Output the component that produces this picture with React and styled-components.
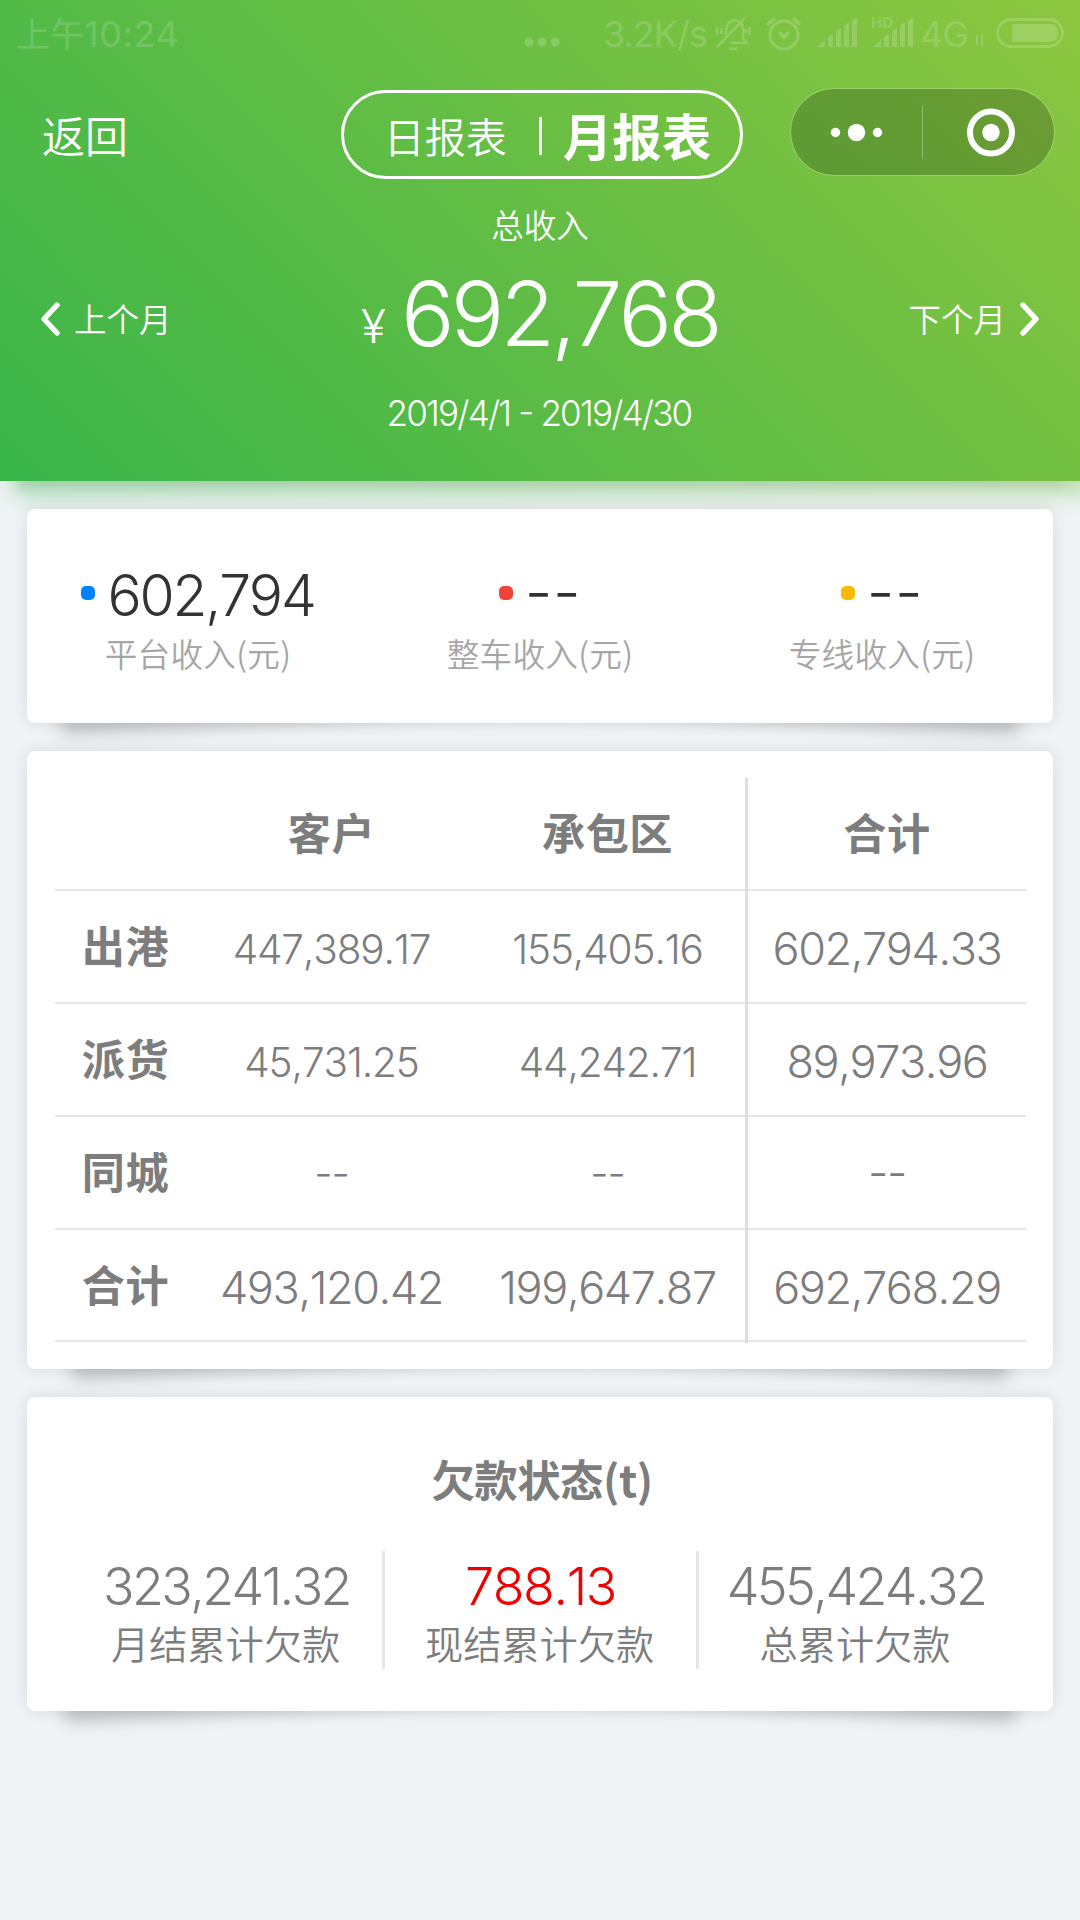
import React from "react";
import styled, {createGlobalStyle, css} from "styled-components";

const COLORS = {
  page: "#eff3f6",
  white: "#ffffff",
  black: "#333333",
  grey: "#7d7d7d",
  light: "#a6a6a6",
  line: "#e6e6e6",
  blue: "#0081ff",
  red: "#f0443a",
  yellow: "#fbb903",
  alert: "#f00000"
};

const GREEN = "linear-gradient(45deg, #39b54a, #8dc63f)";

const GlobalStyle = createGlobalStyle`
  * {
    box-sizing: border-box;
  }

  body {
    margin: 0;
    background: ${COLORS.page};
    font-family: "Noto Sans CJK SC", sans-serif;
    font-weight: 350;
  }
`;

// light figures, with dashes raised to the height of the digits
const figures = css`
  font-family: Inter, "Noto Sans CJK SC", sans-serif;
  font-weight: 300;
  font-feature-settings: "kern" 0, "case" 1;
`;

const Page = styled.div`
  width: 1080px;
  height: 1920px;
  overflow: hidden;
  position: relative;
  isolation: isolate;
`;

const Header = styled.header`
  position: relative;
  height: 481px;
  color: ${COLORS.white};
  background: ${GREEN};
  box-shadow: 0 18px 16px -16px rgba(0, 0, 0, 0.1);

  &::before {
    content: "";
    position: absolute;
    z-index: -1;
    top: 14px;
    left: 14px;
    width: 100%;
    height: 100%;
    background: inherit;
    filter: blur(11px);
    opacity: 0.4;
  }
`;

const StatusBar = styled.div`
  display: flex;
  height: 88px;
  padding: 0 16px;
  color: rgba(255, 255, 255, 0.18);
  font-family: Inter, "Noto Sans CJK SC", sans-serif;
  font-size: 36px;
  line-height: 69px;
  font-weight: 400;
  white-space: nowrap;

  svg {
    flex: none;
    height: 68px;
  }
`;

const Clock = styled.span`
  flex: none;
  width: 508px;
  font-size: 34px;

  b {
    font-size: 36px;
    font-weight: 400;
    letter-spacing: 0.6px;
  }
`;

const Speed = styled.span`
  flex: none;
  width: 111px;
  margin-left: 43px;
  letter-spacing: -1px;
`;

const NavBar = styled.nav`
  display: flex;
  height: 112px;
  padding-left: 42px;
`;

const Back = styled.div`
  width: 299px;
  font-size: 43px;
  line-height: 92px;
`;

const Tabs = styled.div`
  display: flex;
  justify-content: center;
  align-items: center;
  width: 402px;
  height: 89px;
  margin-top: 2px;
  padding-left: 11px;
  border: 3px solid ${COLORS.white};
  border-radius: 45px;
`;

const Tab = styled.div`
  font-size: ${({$active}) => $active ? 49.5 : 41}px;
  font-weight: ${({$active}) => $active ? 700 : 350};
  line-height: ${({$active}) => $active ? 82 : 84}px;
`;

const TabDivider = styled.i`
  width: 3px;
  height: 38px;
  margin: 3px 21px 0 32px;
  background: ${COLORS.white};
`;

const Capsule = styled.div`
  display: flex;
  align-items: center;
  width: 265px;
  height: 88px;
  margin-left: 47px;
  padding-left: 1px;
  border: 1px solid rgba(255, 255, 255, 0.2);
  border-radius: 44px;
  background: rgba(0, 0, 0, 0.2);
  background-clip: padding-box;
`;

const Summary = styled.section`
  display: grid;
  grid-template-columns: 260px 1fr 260px;
  align-items: center;
`;

const Total = styled.div`
  display: flex;
  flex-direction: column;
  align-items: center;
`;

const TotalLabel = styled.div`
  font-size: 32.5px;
  line-height: 48px;
`;

const TotalValue = styled.div`
  ${figures}
  display: flex;
  align-items: baseline;
  height: 141px;
  font-size: 89px;
  line-height: 132px;
  letter-spacing: -3.8px;
`;

const Currency = styled.span`
  position: relative;
  top: -3px;
  margin-right: 15px;
  font-size: 46px;
  letter-spacing: 0;
`;

const Period = styled.div`
  ${figures}
  margin-left: -2px;
  font-size: 35px;
  line-height: 48px;
  letter-spacing: -1.8px;
`;

const MonthLink = styled.div`
  display: flex;
  align-items: center;
  justify-content: ${({$next}) => $next ? "flex-end" : "flex-start"};
  gap: 14px;
  padding: 0 40px;
  font-size: 32.5px;
  line-height: 44px;

  span {
    padding-bottom: 2px;
  }
`;

const warp = css`
  content: "";
  position: absolute;
  z-index: -1;
  top: 28.8px;
  bottom: 43.2px;
  width: 50%;
  box-shadow: 0 41px 17px rgba(0, 0, 0, 0.2);
`;

const Card = styled.section`
  position: relative;
  margin: 0 27px 28px;
  border-radius: 8px;
  background: ${COLORS.white};
  box-shadow: 0 0 14.4px rgba(0, 0, 0, 0.1);

  &::before {
    ${warp}
    left: 28.8px;
    transform: rotate(-3deg);
  }

  &::after {
    ${warp}
    right: 28.8px;
    transform: rotate(3deg);
  }
`;

const Cards = styled.main`
  padding-top: 28px;
`;

const IncomeCard = styled(Card)`
  display: grid;
  grid-template-columns: repeat(3, 1fr);
  height: 214px;
  padding-top: 52px;
  text-align: center;
`;

const IncomeItem = styled.div`
  display: flex;
  flex-direction: column;
  align-items: center;
`;

const IncomeValue = styled.div`
  ${figures}
  display: flex;
  align-items: center;
  height: 68px;
  color: ${COLORS.black};
  font-size: 57px;
  letter-spacing: -2.2px;

  ${({$empty}) => $empty && css`
    font-size: 61px;
    font-weight: 350;
    letter-spacing: 0.6px;
  `}
`;

const Dot = styled.i`
  width: 14px;
  height: 14px;
  margin: 0 12px 4px 0;
  border-radius: 5px;
  background: ${({$color}) => $color};
`;

const IncomeLabel = styled.div`
  color: ${COLORS.light};
  font-size: 32.6px;
  line-height: 48px;
  letter-spacing: 0.3px;
`;

const TableCard = styled(Card)`
  height: 618px;
  padding: 27px 27px 0 28px;
`;

const Row = styled.div`
  display: grid;
  grid-template-columns: 138px 277px 275px 1fr;
  height: 112.9px;
  border-bottom: 2px solid ${COLORS.line};
  color: ${COLORS.grey};
  text-align: center;
`;

const Cell = styled.div`
  ${figures}
  font-size: ${({$big}) => $big ? 45 : 40.5}px;
  line-height: ${({$big}) => $big ? 115 : 118}px;
  letter-spacing: ${({$big}) => $big ? -1.4 : -1.1}px;
`;

const HeadCell = styled.div`
  font-size: 43.2px;
  font-weight: 700;
  line-height: 106px;
  letter-spacing: 0.5px;
`;

const NameCell = styled(HeadCell)`
  padding-left: 3px;
`;

const SumCell = styled(Cell)`
  height: 113px;
  border-left: 3px solid #dedede;
`;

const SumHead = styled(HeadCell)`
  height: 113px;
  border-left: 3px solid #dedede;
`;

const DebtCard = styled(Card)`
  height: 314px;
  padding: 50px 40px 0 44px;
  color: ${COLORS.grey};
  text-align: center;
`;

const DebtTitle = styled.h2`
  margin: 0 0 42px;
  font-size: 43.4px;
  font-weight: 700;
  line-height: 62px;
  letter-spacing: -0.5px;
`;

const DebtList = styled.div`
  display: grid;
  grid-template-columns: repeat(3, 1fr);
`;

const DebtItem = styled.div`
  height: 118px;
  padding-top: 6px;
  border-right: 3px solid ${COLORS.line};

  &:last-child {
    border-right: 0;
  }
`;

const DebtValue = styled.div`
  ${figures}
  color: ${({$alert}) => $alert ? COLORS.alert : COLORS.grey};
  font-size: 52px;
  line-height: 60px;
  letter-spacing: ${({$alert}) => $alert ? -1.4 : -2.6}px;
`;

const DebtLabel = styled.div`
  margin-left: -2px;
  font-size: 38.2px;
  line-height: 52px;
`;

const incomes = [
  {color: COLORS.blue, value: "602,794", label: "平台收入(元)"},
  {color: COLORS.red, value: "--", label: "整车收入(元)"},
  {color: COLORS.yellow, value: "--", label: "专线收入(元)"}
];

const rows = [
  {name: "出港", values: ["447,389.17", "155,405.16"], sum: "602,794.33"},
  {name: "派货", values: ["45,731.25", "44,242.71"], sum: "89,973.96"},
  {name: "同城", values: ["--", "--"], sum: "--"},
  {name: "合计", values: ["493,120.42", "199,647.87"], sum: "692,768.29", total: true}
];

const debts = [
  {value: "323,241.32", label: "月结累计欠款"},
  {value: "788.13", label: "现结累计欠款", alert: true},
  {value: "455,424.32", label: "总累计欠款"}
];

// everything right of the network speed in the system bar
const StatusIcons = () => (
  <svg width="350" height="68" viewBox="714 0 350 68" fill="none" stroke="currentColor" strokeWidth="2.6">
    <path d="M730 43H747L743 38V30C743 17 727 17 726 30V35M717 47L745 18M729 48Q733 50 737 48M717.500 27Q716 31 717.500 35M721.500 28V34M749 27Q750.500 31 749 35M746 29V33" />
    <circle cx="784" cy="35" r="14" strokeWidth="3" />
    <path d="M779 32L784 37L789 32M767 25L775 18M793 18L800 25" strokeWidth="3.4" />
    <g fill="currentColor" stroke="none">
      <path d="M817 47L825 40V47ZM828 37L833 34V47H828ZM836 32L841 28V47H836ZM844 26L849 22V47H844ZM852 21L857 17V47H852Z" />
      <path d="M873 47L881 40V47ZM884 37L889 34V47H884ZM892 32L897 28V47H892ZM900 26L905 22V47H900ZM908 21L913 17V47H908Z" />
      <path d="M1012 24H1050Q1058 24 1058 33Q1058 42 1050 42H1012Z" />
      <text x="871" y="28" fontSize="15" fontWeight="700">HD</text>
      <text x="920" y="47" fontSize="36" fontWeight="400" letterSpacing="-1">4G</text>
    </g>
    <path d="M977 35V46M982 35V46" strokeWidth="2" />
    <rect x="997.5" y="19.5" width="65" height="27" rx="13.5" strokeWidth="3" />
  </svg>
);

const Dots = () => (
  <svg width="36" height="68" viewBox="0 0 36 68" fill="currentColor">
    <circle cx="5" cy="42" r="4.5" />
    <circle cx="18" cy="42" r="4.5" />
    <circle cx="31" cy="42" r="4.5" />
  </svg>
);

const CapsuleIcons = () => (
  <svg width="262" height="86" viewBox="0 0 262 86" fill="#fff">
    <circle cx="43.5" cy="43.5" r="4.7" />
    <circle cx="64.5" cy="43.5" r="8.7" />
    <circle cx="85.5" cy="43.5" r="4.7" />
    <path d="M130.5 16V70" stroke="#fff" strokeOpacity="0.3" />
    <circle cx="199" cy="43.5" r="8.7" />
    <circle cx="199" cy="43.5" r="21" fill="none" stroke="#fff" strokeWidth="6" />
  </svg>
);

const Chevron = ({d}) => (
  <svg width="20" height="36" viewBox="0 0 20 36" fill="none" stroke="#fff" strokeWidth="5.4" strokeLinecap="round" strokeLinejoin="round">
    <path d={d} />
  </svg>
);

const App = () => {
  return (
    <Page>
      <GlobalStyle />
      <Header>
        <StatusBar>
          <Clock>上午<b>10:24</b></Clock>
          <Dots />
          <Speed>3.2K/s</Speed>
          <StatusIcons />
        </StatusBar>
        <NavBar>
          <Back>返回</Back>
          <Tabs>
            <Tab>日报表</Tab>
            <TabDivider />
            <Tab $active>月报表</Tab>
          </Tabs>
          <Capsule>
            <CapsuleIcons />
          </Capsule>
        </NavBar>
        <Summary>
          <MonthLink>
            <Chevron d="M17 4L4 18L17 32" />
            <span>上个月</span>
          </MonthLink>
          <Total>
            <TotalLabel>总收入</TotalLabel>
            <TotalValue><Currency>¥</Currency>692,768</TotalValue>
            <Period>2019/4/1 - 2019/4/30</Period>
          </Total>
          <MonthLink $next>
            <span>下个月</span>
            <Chevron d="M3 4L16 18L3 32" />
          </MonthLink>
        </Summary>
      </Header>
      <Cards>
        <IncomeCard>
          {incomes.map(({color, value, label}) => (
            <IncomeItem key={label}>
              <IncomeValue $empty={value === "--"}><Dot $color={color} />{value}</IncomeValue>
              <IncomeLabel>{label}</IncomeLabel>
            </IncomeItem>
          ))}
        </IncomeCard>
        <TableCard>
          <Row>
            <HeadCell />
            <HeadCell>客户</HeadCell>
            <HeadCell>承包区</HeadCell>
            <SumHead>合计</SumHead>
          </Row>
          {rows.map(({name, values, sum, total}) => (
            <Row key={name}>
              <NameCell>{name}</NameCell>
              {values.map((value, i) => <Cell key={i} $big={total}>{value}</Cell>)}
              <SumCell $big>{sum}</SumCell>
            </Row>
          ))}
        </TableCard>
        <DebtCard>
          <DebtTitle>欠款状态(t)</DebtTitle>
          <DebtList>
            {debts.map(({value, label, alert}) => (
              <DebtItem key={label}>
                <DebtValue $alert={alert}>{value}</DebtValue>
                <DebtLabel>{label}</DebtLabel>
              </DebtItem>
            ))}
          </DebtList>
        </DebtCard>
      </Cards>
    </Page>
  );
};

export default App;
